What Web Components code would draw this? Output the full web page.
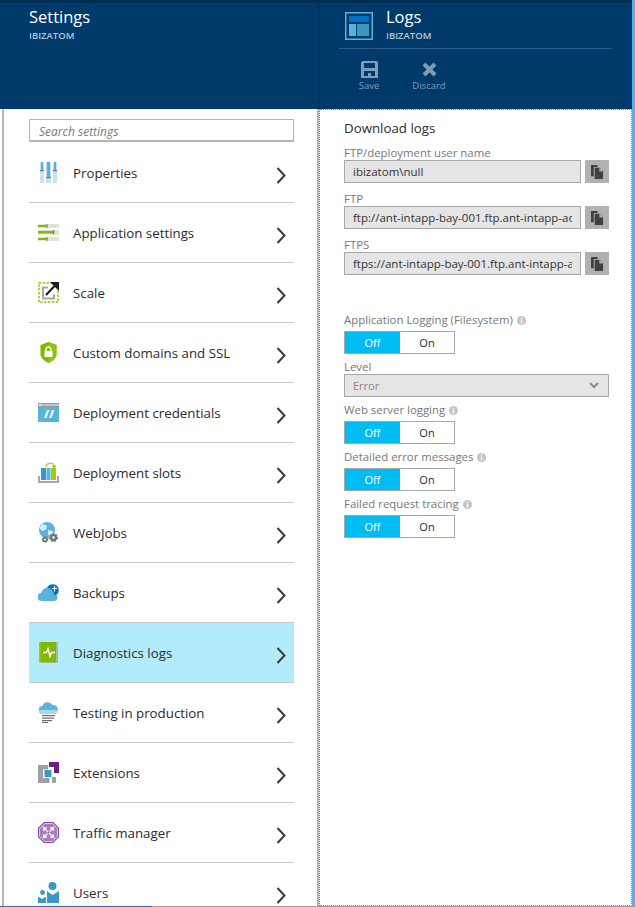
<!DOCTYPE html>
<html>
<head>
<meta charset="utf-8">
<style>
html, body { margin: 0; padding: 0; height: 907px; overflow: hidden; background: #fff; font-family: "Open Sans", "Liberation Sans", sans-serif; }
</style>
</head>
<body>
<portal-view></portal-view>
<script>
/*iconos del menu de ajustes, todos en una caja de 21x21*/
const svg21 = (inner) => `<svg width="21" height="21" viewBox="0 0 21 21">${inner}</svg>`;
const ICONS = {
  properties: svg21(`<g fill="#c5e3f1"><rect x="2" y="0" width="4" height="21"/><rect x="8" y="0" width="5" height="21"/><rect x="15" y="0" width="4" height="21"/></g><g fill="#4fb1dc"><rect x="3" y="0" width="2" height="8"/><rect x="9" y="0" width="3" height="15"/><rect x="16" y="0" width="2" height="8"/></g><g fill="#777"><rect x="2" y="8" width="4" height="1.200"/><rect x="8" y="15" width="5" height="1.200"/><rect x="15" y="8" width="4" height="1.200"/></g>`),
  appsettings: svg21(`<g fill="#e0e6d4"><rect x="0" y="2" width="21" height="4"/><rect x="0" y="8" width="21" height="4.500"/><rect x="0" y="15" width="21" height="4"/></g><g fill="#7fba00"><rect x="0" y="3" width="9" height="2"/><rect x="0" y="9" width="15" height="2.500"/><rect x="0" y="16" width="9" height="2"/></g><g fill="#777"><rect x="8.500" y="2" width="1" height="4"/><rect x="15" y="8" width="1.200" height="4.500"/><rect x="8.500" y="15" width="1" height="4"/></g>`),
  scale: svg21(`<rect x="1" y="1" width="19" height="19" fill="none" stroke="#b8d432" stroke-width="2" stroke-dasharray="2.500 1.300"/><path d="M10 5.500H5v11h11v-4" fill="none" stroke="#a8a8a8" stroke-width="2"/><path d="M8 13L18 2.500" fill="none" stroke="#1c1c1c" stroke-width="2"/><path d="M12 0h9v9z" fill="#1c1c1c"/>`),
  domains: svg21(`<path d="M10.500 0L18.500 3v9c0 4-3.500 7-8 9-4.500-2-8-5-8-9V3z" fill="#7fba00"/><path d="M10.500 0L18.500 3v9c0 4-3.500 7-8 9z" fill="#8cc414"/><rect x="6.500" y="9" width="8" height="6" fill="#fff"/><path d="M8 9V7.500a2.500 2.500 0 0 1 5 0V9" fill="none" stroke="#fff" stroke-width="1.400"/>`),
  credentials: svg21(`<rect x="0" y="1" width="21" height="19" fill="#59b4d9"/><rect x="0" y="1" width="21" height="4" fill="#8f9ba3"/><rect x="3" y="2.500" width="18" height="1" fill="#f0f2f3"/><circle cx="2" cy="3" r="1.200" fill="#dff1f9"/><path d="M9 8h2.500l-3 8H6zM14 8h2.500l-3 8H11z" fill="#e6f4fa"/>`),
  slots: svg21(`<path d="M8 5C8 1 14 0 16 3" fill="none" stroke="#b8d432" stroke-width="1.500"/><path d="M14 3.500h4.500L16 6.500z" fill="#7fba00"/><path d="M1 14v6h19v-6" fill="none" stroke="#a8a8a8" stroke-width="2"/><rect x="3" y="6" width="5" height="12" fill="#3999c6"/><rect x="8.500" y="6" width="4" height="12" fill="#59b4d9"/><rect x="13" y="6" width="5" height="12" fill="#a5ce00"/>`),
  webjobs: svg21(`<circle cx="9" cy="8" r="8" fill="#59b4d9"/><path d="M4 2l5 1.500-1 4-4 1.500-2.500-3zM10 8l4.500 1 .5 3-3 3-2-2.500z" fill="#d7eef8"/><circle cx="7" cy="17.500" r="2.600" fill="#737373" stroke="#737373" stroke-width="1.500" stroke-dasharray="1.500 1"/><circle cx="7" cy="17.500" r="1" fill="#fff"/><circle cx="15.500" cy="15.500" r="3.500" fill="#737373" stroke="#737373" stroke-width="2" stroke-dasharray="1.800 1.200"/><circle cx="15.500" cy="15.500" r="1.300" fill="#fff"/>`),
  backups: svg21(`<path d="M4 19a4 4 0 0 1-.800-8C4 7.500 7.500 5 11 6c3.500.800 5 3 5 5.500a3.800 3.800 0 0 1 .500 7.500z" fill="#59b4d9"/><path d="M9 5.500C11 2 17 1 19.500 4.500c1.500 2 1.500 4.500.500 7l-3 2-2-3.500c-1-2.500-3-4-6.500-4.500z" fill="#0072c6"/><path d="M14 6.500h2.500V4M16.500 6.500h2.500M16.500 6.500v3" fill="none" stroke="#fff" stroke-width="1.200"/>`),
  diagnostics: svg21(`<rect x="1" y="0" width="19" height="21" fill="#a9bd8e"/><rect x="1" y="0" width="17" height="20" fill="#7fba00"/><rect x="1" y="0" width="1.500" height="20" fill="#a5ce00"/><path d="M5 10.500h3.500l1.500-4 2 8 1.500-4H17" fill="none" stroke="#fff" stroke-width="1.400"/>`),
  testing: svg21(`<path d="M5 12a4 4 0 0 1-.500-8A5.500 5.500 0 0 1 14.500 3 4.500 4.500 0 0 1 16 12z" fill="#59b4d9"/><path d="M1 8h19a4 4 0 0 1-4 4H5a4 4 0 0 1-4-4z" fill="#a9d8ee"/><g fill="#6e6e6e"><rect x="4" y="13" width="13" height="1.200"/><rect x="4" y="15.500" width="12" height="1.200"/><rect x="4" y="18" width="10" height="1.200"/><rect x="4" y="20" width="6" height="1"/></g>`),
  extensions: svg21(`<path d="M0 3h10v4.500H5V16h6.500v5H0z" fill="#a0a1a2"/><rect x="14" y="15" width="4" height="6" fill="#a0a1a2"/><path d="M11 0h10v11h-5V5h-5z" fill="#68217a"/><rect x="6.500" y="8" width="7" height="7" fill="#3999c6"/>`),
  traffic: svg21(`<path d="M6 0h9l6 6v9l-6 6H6l-6-6V6z" fill="#804998"/><path d="M6.500 1.500h8l5 5v8l-5 5h-8l-5-5v-8z" fill="#a67dba" stroke="#fff" stroke-width=".7"/><path d="M4.500 4.500l5 1-1.500 1.500 2.500 2.500-1 1L7 8l-1.500 1.500zM16.500 16.500l-5-1 1.500-1.500-2.500-2.500 1-1L14 13l1.500-1.500zM16.500 4.500l-1 5L14 8l-2 2-1-1 2-2-1.500-1.500zM4.500 16.500l1-5L7 13l2-2 1 1-2 2 1.500 1.500z" fill="#f2ecf6"/>`),
  users: svg21(`<circle cx="14.500" cy="4" r="4" fill="#3999c6"/><path d="M9 9l5.500 4L21 9v12H9z" fill="#3999c6"/><circle cx="4.500" cy="10.500" r="2.400" fill="#3999c6"/><path d="M0 14.500l4 2.500 4-2.500V21H0z" fill="#3999c6"/>`)
};

/*titulo de una hoja: nombre y suscripcion*/
class BladeTitle extends HTMLElement {
  constructor() {
    super();
    this.attachShadow({ mode: 'open' });
    this.shadowRoot.innerHTML = `
      <style>
        :host { display: block; color: #fff; }
        .name { font-size: 16.500px; line-height: 24px; }
        .sub { font-size: 9.500px; line-height: 13px; font-weight: 600; color: #b5c7d7; margin-top: 0; }
      </style>
      <div class="name"><slot></slot></div>
      <div class="sub"><slot name="sub"></slot></div>`;
  }
}
customElements.define('blade-title', BladeTitle);

/*fila del menu de ajustes*/
class SettingRow extends HTMLElement {
  constructor() {
    super();
    this.attachShadow({ mode: 'open' });
    const icon = ICONS[this.getAttribute('icon')] || '';
    this.shadowRoot.innerHTML = `
      <style>
        :host { display: flex; align-items: center; flex: none; height: 59px; border-bottom: 1px solid #c8c8c8; color: #2b2b2b; font-size: 13.300px; }
        :host([selected]) { background: #b2ebfb; }
        .ico { width: 35px; padding-left: 9px; }
        .ico svg { display: block; }
        .txt { flex: 1; margin-top: 1px; }
        .chev { display: block; width: 10px; height: 17px; margin: 5px 8px 0 0; }
      </style>
      <div class="ico">${icon}</div>
      <div class="txt"><slot></slot></div>
      <svg class="chev" viewBox="0 0 10 17"><path d="M1.500 1l7 7.500-7 7.500" fill="none" stroke="#3a3a3a" stroke-width="2"/></svg>`;
  }
}
customElements.define('setting-row', SettingRow);

/*hoja izquierda con la lista de ajustes*/
class SettingsBlade extends HTMLElement {
  constructor() {
    super();
    this.attachShadow({ mode: 'open' });
    const rows = [
      ['properties', 'Properties'], ['appsettings', 'Application settings'], ['scale', 'Scale'],
      ['domains', 'Custom domains and SSL'], ['credentials', 'Deployment credentials'], ['slots', 'Deployment slots'],
      ['webjobs', 'WebJobs'], ['backups', 'Backups'], ['diagnostics', 'Diagnostics logs'],
      ['testing', 'Testing in production'], ['extensions', 'Extensions'], ['traffic', 'Traffic manager'], ['users', 'Users']
    ].map(([i, t]) => `<setting-row icon="${i}"${i === 'diagnostics' ? ' selected' : ''}>${t}</setting-row>`).join('');
    this.shadowRoot.innerHTML = `
      <style>
        :host { display: flex; flex-direction: column; flex: none; width: 320px; height: 100%; overflow: hidden; background: #fff; }
        header { flex: none; height: 109px; box-sizing: border-box; padding: 2px 0 0 29px; background: #003a6a; border-top: 3px solid #002d54; border-right: 2px solid #00325c; }
        .wrap { flex: 1; min-height: 0; display: flex; border-right: 1px dotted #777; }
        .body { flex: 1; min-width: 0; display: flex; flex-direction: column; overflow: hidden; margin-left: 2px; padding: 10px 23px 0 25px; border-left: 2px solid #b5b5b5; border-right: 2px solid #b0b0b0; }
        .search { flex: none; height: 18px; border: 1px solid #b4b4b4; border-bottom-width: 2px; padding: 2px 0 0 9px; font-size: 12px; line-height: 20px; font-style: italic; color: #7a7a7a; margin-bottom: 1px; }
      </style>
      <header><blade-title>Settings<span slot="sub">IBIZATOM</span></blade-title></header>
      <div class="wrap">
        <div class="body">
          <div class="search">Search settings</div>
          ${rows}
        </div>
      </div>`;
  }
}
customElements.define('settings-blade', SettingsBlade);

/*boton de la barra de comandos*/
class CommandButton extends HTMLElement {
  constructor() {
    super();
    this.attachShadow({ mode: 'open' });
    this.shadowRoot.innerHTML = `
      <style>
        :host { display: flex; flex-direction: column; align-items: center; width: 60px; color: #7f9cb6; font-size: 9.500px; line-height: 13px; }
        ::slotted(svg) { display: block; margin-bottom: 1px; }
      </style>
      <slot name="icon"></slot><slot></slot>`;
  }
}
customElements.define('command-button', CommandButton);

/*campo de solo lectura con boton de copiar*/
class CopyField extends HTMLElement {
  constructor() {
    super();
    this.attachShadow({ mode: 'open' });
    this.shadowRoot.innerHTML = `
      <style>
        :host { display: block; }
        .lab { font-size: 11.400px; line-height: 14px; color: #777; height: 14px; }
        .row { display: flex; gap: 4px; }
        .val { width: 237px; height: 23px; box-sizing: border-box; border: 1px solid #a8a8a8; background: #e5e5e5; padding: 0 8px; font-size: 11.500px; line-height: 21px; color: #333; }
        .clip { display: block; overflow: hidden; white-space: nowrap; }
        .btn { width: 24px; height: 23px; background: #b1b1b1; display: flex; align-items: center; justify-content: center; }
        .btn svg { display: block; }
      </style>
      <div class="lab">${this.getAttribute('label')}</div>
      <div class="row">
        <div class="val"><span class="clip"><slot></slot></span></div>
        <div class="btn"><svg width="13" height="14" viewBox="0 0 14 15"><path d="M0 0h7v2H3v10H0z" fill="#404040"/><path d="M4 3h5l4 4v8H4z" fill="#404040"/><path d="M9 3v4h4z" fill="#b1b1b1"/></svg></div>
      </div>`;
  }
}
customElements.define('copy-field', CopyField);

/*interruptor Off / On*/
class ToggleField extends HTMLElement {
  constructor() {
    super();
    this.attachShadow({ mode: 'open' });
    this.shadowRoot.innerHTML = `
      <style>
        :host { display: block; }
        .lab { display: flex; align-items: center; gap: 4px; font-size: 11.400px; line-height: 14px; height: 14px; margin-bottom: 4px; color: #777; }
        .lab svg { display: block; }
        .sw { display: flex; width: 111px; height: 23px; box-sizing: border-box; border: 1px solid #a8a8a8; font-size: 11px; }
        .sw div { display: flex; align-items: center; justify-content: center; }
        .off { width: 55px; background: #00bcf2; color: #fff; }
        .on { flex: 1; color: #2b2b2b; background: #fff; }
      </style>
      <div class="lab"><slot></slot><svg width="9" height="9" viewBox="0 0 9 9"><circle cx="4.500" cy="4.500" r="4.500" fill="#c4c4c4"/><rect x="3.800" y="1.500" width="1.400" height="1.300" fill="#fff"/><rect x="3.800" y="3.500" width="1.400" height="4" fill="#fff"/></svg></div>
      <div class="sw"><div class="off">Off</div><div class="on">On</div></div>`;
  }
}
customElements.define('toggle-field', ToggleField);

/*desplegable deshabilitado*/
class LevelSelect extends HTMLElement {
  constructor() {
    super();
    this.attachShadow({ mode: 'open' });
    this.shadowRoot.innerHTML = `
      <style>
        :host { display: block; }
        .lab { font-size: 11.400px; line-height: 14px; height: 14px; color: #777; }
        .box { display: flex; align-items: center; justify-content: space-between; height: 23px; box-sizing: border-box; border: 1px solid #a8a8a8; background: #e5e5e5; padding: 0 9px 0 8px; font-size: 11px; color: #8a8a8a; }
        svg { display: block; }
      </style>
      <div class="lab">${this.getAttribute('label')}</div>
      <div class="box"><slot></slot><svg width="10" height="7" viewBox="0 0 10 7"><path d="M1 1l4 4 4-4" fill="none" stroke="#8a8a8a" stroke-width="2"/></svg></div>`;
  }
}
customElements.define('level-select', LevelSelect);

/*hoja derecha de logs*/
class LogsBlade extends HTMLElement {
  constructor() {
    super();
    this.attachShadow({ mode: 'open' });
    this.shadowRoot.innerHTML = `
      <style>
        :host { display: flex; flex-direction: column; flex: none; width: 312px; height: 100%; background: #fff; }
        header { flex: none; height: 109px; box-sizing: border-box; background: #003a6a; border-top: 3px solid #002d54; padding-left: 19px; }
        .head { padding: 2px 0 0 6px; display: flex; gap: 13px; height: 45px; box-sizing: border-box; }
        .head svg { display: block; flex: none; margin-top: 7px; }
        hr { border: 0; border-top: 1px solid #2a5a85; margin: 0; width: 273px; }
        .cmds { display: flex; padding-top: 12px; }
        main { flex: 1; min-height: 0; box-sizing: border-box; border-top: 1px dotted #888; border-right: 1px dotted #888; border-bottom: 1px dotted #888; padding: 10px 22px 0 24px; }
        h2 { margin: 0 0 10px; font-weight: 400; font-size: 13.300px; line-height: 16px; color: #2b2b2b; }
        .fields { display: flex; flex-direction: column; gap: 9px; }
        .logs { display: flex; flex-direction: column; gap: 6px; margin-top: 38px; }
      </style>
      <header>
        <div class="head">
          <svg width="28" height="28" viewBox="0 0 28 28"><rect x="0" y="0" width="28" height="28" fill="#59b4d9"/><rect x="1.500" y="1.500" width="25" height="25" fill="#003a6a"/><rect x="4" y="4" width="20" height="6" fill="#0072c6"/><rect x="4" y="12" width="7" height="12" fill="#59b4d9"/><rect x="12" y="12" width="12" height="12" fill="#3999c6"/></svg>
          <blade-title>Logs<span slot="sub">IBIZATOM</span></blade-title>
        </div>
        <hr>
        <div class="cmds">
          <command-button>
            <svg slot="icon" width="17" height="17" viewBox="0 0 17 17"><path fill-rule="evenodd" d="M0 2a2 2 0 0 1 2-2h13a2 2 0 0 1 2 2v15H0zM3 2v5h11V2zM3 10v5h4v-3h3v3h4v-5z" fill="#7f9cb6"/></svg>
            Save
          </command-button>
          <command-button>
            <svg slot="icon" width="17" height="17" viewBox="0 0 17 17"><path d="M3 3l11 11M14 3L3 14" fill="none" stroke="#7f9cb6" stroke-width="4"/></svg>
            Discard
          </command-button>
        </div>
      </header>
      <main>
        <h2>Download logs</h2>
        <div class="fields">
          <copy-field label="FTP/deployment user name">ibizatom\\null</copy-field>
          <copy-field label="FTP">ftp://ant-intapp-bay-001.ftp.ant-intapp-aovr</copy-field>
          <copy-field label="FTPS">ftps://ant-intapp-bay-001.ftp.ant-intapp-aovr</copy-field>
        </div>
        <div class="logs">
          <toggle-field>Application Logging (Filesystem)</toggle-field>
          <level-select label="Level">Error</level-select>
          <toggle-field>Web server logging</toggle-field>
          <toggle-field>Detailed error messages</toggle-field>
          <toggle-field>Failed request tracing</toggle-field>
        </div>
      </main>`;
  }
}
customElements.define('logs-blade', LogsBlade);

/*marco general del portal*/
class PortalView extends HTMLElement {
  constructor() {
    super();
    this.attachShadow({ mode: 'open' });
    this.shadowRoot.innerHTML = `
      <style>
        :host { display: block; width: 635px; height: 907px; background: #fff; }
        .blades { display: flex; height: 906px; }
        .edge { flex: 1; background: #59aef0; }
        .foot { height: 1px; background: linear-gradient(90deg, #0078d7 0 152px, #a0a0a0 152px); }
      </style>
      <div class="blades">
        <settings-blade></settings-blade>
        <logs-blade></logs-blade>
        <div class="edge"></div>
      </div>
      <div class="foot"></div>`;
  }
}
customElements.define('portal-view', PortalView);
</script>
</body>
</html>
